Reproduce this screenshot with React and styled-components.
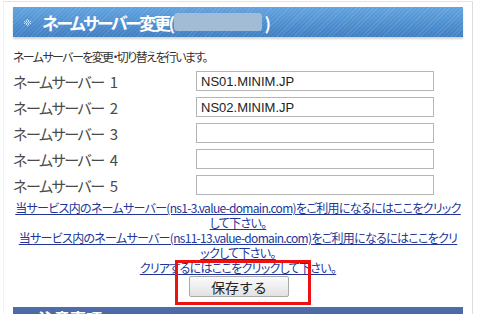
import React from 'react';
import styled, { createGlobalStyle } from 'styled-components';

const GlobalStyle = createGlobalStyle`
  html, body {
    margin: 0;
    padding: 0;
    background: #ffffff;
  }
  body {
    font-family: "Liberation Sans", "Noto Sans CJK JP", sans-serif;
    color: #333333;
  }
`;

const Page = styled.div`
  position: relative;
  width: 480px;
  height: 314px;
  overflow: hidden;
  background: #ffffff;
`;

const Frame = styled.div`
  margin: 1px 7px 0 3px;
  height: 320px;
  border-top: 1px solid #ecdfe6;
  border-left: 1px solid #f2f2f2;
  border-right: 1px solid #dcdcdc;
  padding: 5px 9px 0 9px;
`;

const Header = styled.div`
  display: flex;
  align-items: center;
  height: 30px;
  padding-left: 11px;
  background:
    repeating-linear-gradient(135deg, rgba(255, 255, 255, 0.1) 0 1px, transparent 1px 3px),
    linear-gradient(#62a3df, #3f7fc3);
  box-shadow: 0 2px 2px rgba(0, 0, 0, 0.18);
  color: #ffffff;
  font-family: "Noto Sans CJK JP", sans-serif;
  font-size: 17px;
  font-weight: bold;
  font-feature-settings: "palt";
  letter-spacing: -2.4px;
`;

const HeaderIcon = styled.svg`
  width: 7px;
  height: 7px;
  margin-right: 11px;
`;

const Masked = styled.span`
  display: inline-block;
  width: 88px;
  height: 18px;
  margin: 0 3px 0 1px;
  border-radius: 3px;
  background: #a3bcd5;
  filter: blur(0.6px);
`;

const Intro = styled.p`
  margin: 12px 0 0;
  font-family: "Noto Sans CJK JP", sans-serif;
  font-size: 12px;
  line-height: 15px;
  font-feature-settings: "palt";
  letter-spacing: -1.6px;
  color: #333333;
`;

const Rows = styled.div`
  display: flex;
  flex-direction: column;
  gap: 6px;
  margin-top: 7px;
`;

const Row = styled.div`
  display: flex;
  align-items: center;
  height: 20px;
`;

const Label = styled.span`
  width: 183px;
  font-family: "Noto Sans CJK JP", sans-serif;
  font-size: 15px;
  font-feature-settings: "palt";
  letter-spacing: -1.4px;
  color: #4a4a4a;
`;

const LabelNum = styled.span`
  margin-left: 6px;
  letter-spacing: 0;
`;

const Field = styled.input`
  box-sizing: border-box;
  width: 238px;
  height: 20px;
  padding: 0 4px;
  border: 1px solid #b5b5b5;
  font-family: "Liberation Sans", sans-serif;
  font-size: 13px;
  color: #222222;
  background: #ffffff;
`;

const Links = styled.div`
  margin-top: 5px;
  text-align: center;
  white-space: nowrap;
  font-family: "Noto Sans CJK JP", sans-serif;
  font-size: 12px;
  line-height: 15px;
  font-feature-settings: "palt";
  letter-spacing: -0.7px;
`;

const Link = styled.a`
  color: #22369a;
  text-decoration: underline;
  cursor: pointer;
`;

const Actions = styled.div`
  display: flex;
  justify-content: center;
  margin-top: 1px;
`;

const SaveButton = styled.button`
  width: 100px;
  height: 21px;
  padding: 0;
  margin-left: 2px;
  border: 1px solid #a9a9a9;
  border-radius: 2px;
  background: linear-gradient(#fbfbfb, #e2e2e2);
  font-family: "Noto Sans CJK JP", sans-serif;
  font-size: 14px;
  line-height: 18px;
  color: #222222;
`;

const Highlight = styled.div`
  position: absolute;
  left: 175px;
  top: 260px;
  width: 136px;
  height: 45px;
  box-sizing: border-box;
  border: 3px solid #ee1111;
  pointer-events: none;
`;

const SubHeader = styled.div`
  margin-top: 10px;
  height: 30px;
  padding-left: 25px;
  background: linear-gradient(#4f6ea9, #3e5d98);
  color: #ffffff;
  font-family: "Noto Sans CJK JP", sans-serif;
  font-size: 16px;
  font-weight: bold;
  line-height: 22px;
`;

const servers = ['NS01.MINIM.JP', 'NS02.MINIM.JP', '', '', ''];

const App = () => {
  return (
    <>
      <GlobalStyle />
      <Page>
        <Frame>
          <Header>
            <HeaderIcon viewBox="0 0 7 7">
              {[
                [3, 0], [2, 1], [4, 1], [0, 2], [2, 2], [4, 2], [6, 2],
                [1, 3], [3, 3], [5, 3], [0, 4], [2, 4], [4, 4], [6, 4],
                [2, 5], [4, 5], [3, 6],
              ].map(([x, y]) => (
                <rect key={`${x}-${y}`} x={x} y={y} width="1" height="1" fill="#cfe3f5" />
              ))}
            </HeaderIcon>
            ネームサーバー変更(<Masked />)
          </Header>

          <Intro>ネームサーバーを変更・切り替えを行います。</Intro>

          <Rows>
            {servers.map((value, i) => (
              <Row key={i}>
                <Label>
                  ネームサーバー<LabelNum>{i + 1}</LabelNum>
                </Label>
                <Field defaultValue={value} />
              </Row>
            ))}
          </Rows>

          <Links>
            <Link>当サービス内のネームサーバー(ns1-3.value-domain.com)をご利用になるにはここをクリック<br />して下さい。</Link>
            <br />
            <Link>当サービス内のネームサーバー(ns11-13.value-domain.com)をご利用になるにはここをクリ<br />ックして下さい。</Link>
            <br />
            <Link>クリアするにはここをクリックして下さい。</Link>
          </Links>

          <Actions>
            <SaveButton>保存する</SaveButton>
          </Actions>

          <SubHeader>注意事項</SubHeader>
        </Frame>
        <Highlight />
      </Page>
    </>
  );
};

export default App;
